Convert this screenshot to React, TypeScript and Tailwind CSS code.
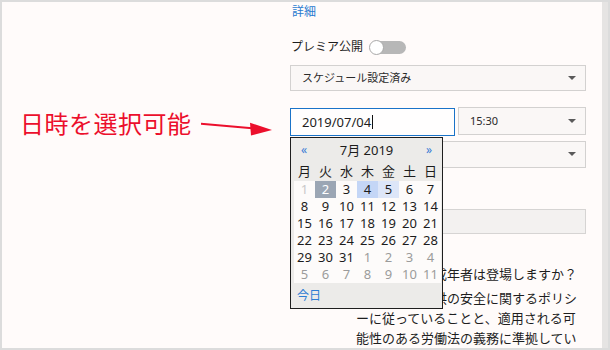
import React from 'react';

type Kind = 'normal' | 'other' | 'disabled' | 'today' | 'selected' | 'hover';

interface ICell {
  d: number;
  kind: Kind;
}

const cellClass: Record<Kind, string> = {
  normal: 'text-[#1c1c1c]',
  other: 'text-[#9b9b9b]',
  disabled: 'text-[#c8c8c8]',
  today: 'bg-[#9ba6b4] text-white',
  selected: 'bg-[#c4d6f6] text-[#1c1c1c]',
  hover: 'bg-[#dde6f8] text-[#1c1c1c]',
};

const dayNames = ['月', '火', '水', '木', '金', '土', '日'];

// 2019年7月、月曜始まり
const buildCells = (): ICell[] => {
  const cells: ICell[] = [];
  for (let d = 1; d <= 31; d++) {
    let kind: Kind = 'normal';
    if (d === 1) kind = 'disabled';
    if (d === 2) kind = 'today';
    if (d === 4) kind = 'selected';
    if (d === 5) kind = 'hover';
    cells.push({ d, kind });
  }
  for (let d = 1; d <= 11; d++) cells.push({ d, kind: 'other' });
  return cells;
};

const Caret = () => (
  <svg width="8" height="4" viewBox="0 0 8 4">
    <path d="M0 0h8L4 4z" fill="#5a5a5a" />
  </svg>
);

const Calendar = () => (
  <div className="absolute top-[29px] left-0 z-10 w-[153px] border border-[#1e1e1e] bg-[#ecebe9]">
    <div className="flex h-[23px] items-center px-[10px]">
      <span className="w-[14px] text-left text-[12px] text-[#3a7bd5]">«</span>
      <span className="flex-1 text-center text-[13px] leading-[16px] text-[#1c1c1c]">7月 2019</span>
      <span className="w-[14px] text-right text-[12px] text-[#3a7bd5]">»</span>
    </div>
    <div className="grid h-[20px] grid-cols-[repeat(7,21px)] items-center pl-[3px]">
      {dayNames.map((n) => (
        <span key={n} className="text-center text-[13px] leading-[16px] text-[#1c1c1c]">
          {n}
        </span>
      ))}
    </div>
    <div className="ml-[3px] grid w-[147px] grid-cols-[repeat(7,21px)] bg-[#fdfbfa]">
      {buildCells().map((c, i) => (
        <span
          key={i}
          className={`flex h-[17px] items-center justify-center text-[13px] ${cellClass[c.kind]}`}
        >
          {c.d}
        </span>
      ))}
    </div>
    <div className="flex h-[25px] items-center pl-[6px] text-[12px] text-[#2d7dd4]">今日</div>
  </div>
);

export default function App() {
  return (
    <div className="h-[350px] w-[610px] overflow-hidden bg-[#dcdcdc] font-['Noto_Sans','Noto_Sans_CJK_JP',sans-serif]">
      <div className="flex h-full">
        <div className="mt-[2px] ml-[2px] flex h-[346px] w-[600px] overflow-hidden bg-[#fffbfa]">
          {/* 注釈 */}
          <div className="w-[288px] shrink-0 pt-[106px] pl-[18px]">
            <div className="flex h-[32px] items-center">
              <span className="text-[24px] leading-[32px] tracking-[0.5px] whitespace-nowrap text-[#ec0f2c]">
                日時を選択可能
              </span>
              <svg className="ml-[8px]" width="74" height="32" viewBox="0 0 74 32">
                <path d="M1 15.8L55 20.4" stroke="#ec0f2c" strokeWidth={2} />
                <polygon points="50,14.8 72,22 51,27.5" fill="#ec0f2c" />
              </svg>
            </div>
          </div>

          {/* フォーム */}
          <div className="flex w-[296px] shrink-0 flex-col pt-[2px]">
            <div className="pl-[2px] text-[12px] leading-[16px] text-[#2a7ad0]">詳細</div>

            <div className="mt-[19px] flex h-[16px] items-center">
              <span className="pl-[1px] text-[12px] leading-[16px] text-[#1e1e1e]">プレミア公開</span>
              <div className="relative ml-[6px] h-[15px] w-[37px]">
                <div className="absolute top-[1px] left-[3px] h-[13px] w-[34px] rounded-full bg-[#b7b7b7]" />
                <div className="absolute top-0 left-0 h-[15px] w-[15px] rounded-full border border-[#a8a8a8] bg-white" />
              </div>
            </div>

            <div className="mt-[10px] flex h-[28px] items-center justify-between border border-[#d3d1d0] bg-[#faf7f6] pr-[9px] pl-[11px]">
              <span className="text-[11px] text-[#2a2a2a]">スケジュール設定済み</span>
              <Caret />
            </div>

            <div className="mt-[16px] flex items-start gap-[3px]">
              <div className="relative mt-[1px] h-[28px] w-[165px]">
                <div className="flex h-full items-center border border-[#1a73c8] bg-[#fffefe] pl-[11px]">
                  <span className="text-[13px] text-[#1e1e1e]">2019/07/04</span>
                  <span className="ml-[1px] h-[14px] w-[1px] bg-[#111]" />
                </div>
                <Calendar />
              </div>
              <div className="flex h-[28px] w-[128px] items-center justify-between border border-[#d3d1d0] bg-[#faf7f6] pr-[9px] pl-[11px]">
                <span className="text-[11px] text-[#2a2a2a]">15:30</span>
                <Caret />
              </div>
            </div>

            <div className="mt-[5px] flex h-[28px] items-center justify-end border border-[#d3d1d0] bg-[#faf7f6] pr-[9px]">
              <Caret />
            </div>

            <div className="mt-[41px] h-[27px] border border-[#d6d4d3] bg-[#f3f1f0]" />

            <div className="mt-[30px] pl-[1px] text-[13px] leading-[20px] whitespace-nowrap text-[#1e1e1e]">
              この動画コンテンツに未成年者は登場しますか？
            </div>

            <div className="mt-[4px] flex pl-[13px]">
              <span className="mt-[6px] h-[14px] w-[14px] shrink-0 rounded-full border-2 border-[#4a90d9]" />
              <div className="ml-[39px] text-[13px] leading-[20px] whitespace-nowrap text-[#1e1e1e]">
                <div>この動画は子供の安全に関するポリシ</div>
                <div>ーに従っていることと、適用される可</div>
                <div>能性のある労働法の義務に準拠してい</div>
              </div>
            </div>
          </div>
        </div>
        <div className="mt-[2px] h-[346px] w-[6px] bg-[#e6e4e3]" />
      </div>
    </div>
  );
}
